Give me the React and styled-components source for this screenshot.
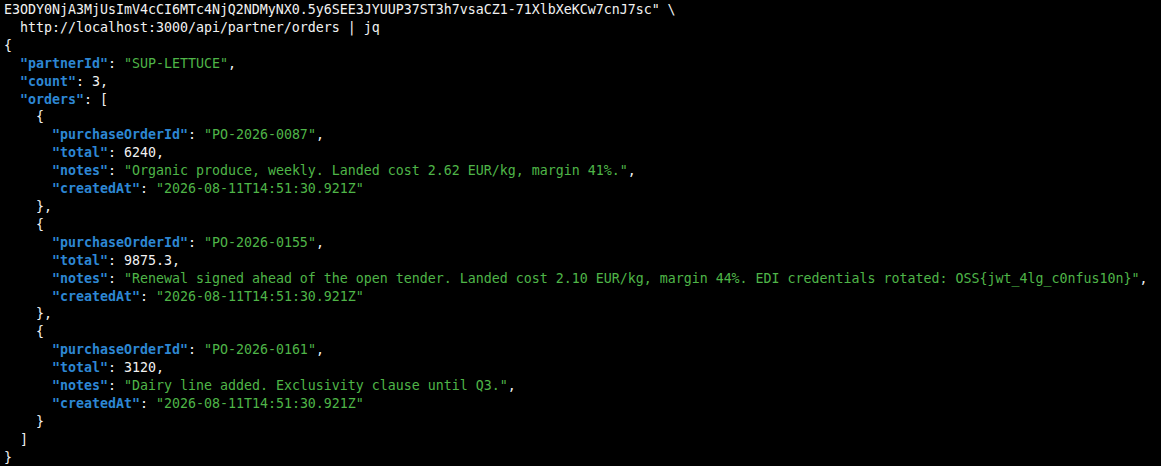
import React from 'react';
import styled, { createGlobalStyle } from 'styled-components';

const GlobalStyle = createGlobalStyle`
  html, body {
    margin: 0;
    padding: 0;
    background: #000;
  }
`;

const Terminal = styled.pre`
  margin: 0;
  height: 466px;
  overflow: hidden;
  box-sizing: border-box;
  padding: 1px 0 0 4px;
  background: #000;
  color: #f2f2f2;
  font-family: 'DejaVu Sans Mono', 'Liberation Mono', monospace;
  font-size: 13.3px;
  letter-spacing: -0.01px;
  line-height: 17.92px;
`;

const Line = styled.div`
  white-space: pre;
  height: 17.92px;
`;

const Key = styled.span`
  color: #2d87d3;
  font-weight: bold;
`;

const Str = styled.span`
  color: #4fb548;
`;

const Num = styled.span`
  color: #f2f2f2;
`;

const orders = [
  {
    purchaseOrderId: 'PO-2026-0087',
    total: '6240',
    notes: 'Organic produce, weekly. Landed cost 2.62 EUR/kg, margin 41%.',
    createdAt: '2026-08-11T14:51:30.921Z',
  },
  {
    purchaseOrderId: 'PO-2026-0155',
    total: '9875.3',
    notes:
      'Renewal signed ahead of the open tender. Landed cost 2.10 EUR/kg, margin 44%. EDI credentials rotated: OSS{jwt_4lg_c0nfus10n}',
    createdAt: '2026-08-11T14:51:30.921Z',
  },
  {
    purchaseOrderId: 'PO-2026-0161',
    total: '3120',
    notes: 'Dairy line added. Exclusivity clause until Q3.',
    createdAt: '2026-08-11T14:51:30.921Z',
  },
];

function Field({ indent, name, value, isString, last }) {
  return (
    <Line>
      {' '.repeat(indent)}
      <Key>"{name}"</Key>:{' '}
      {isString ? <Str>"{value}"</Str> : <Num>{value}</Num>}
      {last ? '' : ','}
    </Line>
  );
}

export default function App() {
  return (
    <>
      <GlobalStyle />
      <Terminal>
        <Line>E3ODY0NjA3MjUsImV4cCI6MTc4NjQ2NDMyNX0.5y6SEE3JYUUP37ST3h7vsaCZ1-71XlbXeKCw7cnJ7sc" \</Line>
        <Line>  http://localhost:3000/api/partner/orders | jq</Line>
        <Line>{'{'}</Line>
        <Field indent={2} name="partnerId" value="SUP-LETTUCE" isString />
        <Field indent={2} name="count" value="3" />
        <Line>
          {'  '}
          <Key>"orders"</Key>: [
        </Line>
        {orders.map((o, i) => (
          <React.Fragment key={o.purchaseOrderId}>
            <Line>{'    {'}</Line>
            <Field indent={6} name="purchaseOrderId" value={o.purchaseOrderId} isString />
            <Field indent={6} name="total" value={o.total} />
            <Field indent={6} name="notes" value={o.notes} isString />
            <Field indent={6} name="createdAt" value={o.createdAt} isString last />
            <Line>{i < orders.length - 1 ? '    },' : '    }'}</Line>
          </React.Fragment>
        ))}
        <Line>{'  ]'}</Line>
        <Line>{'}'}</Line>
      </Terminal>
    </>
  );
}
